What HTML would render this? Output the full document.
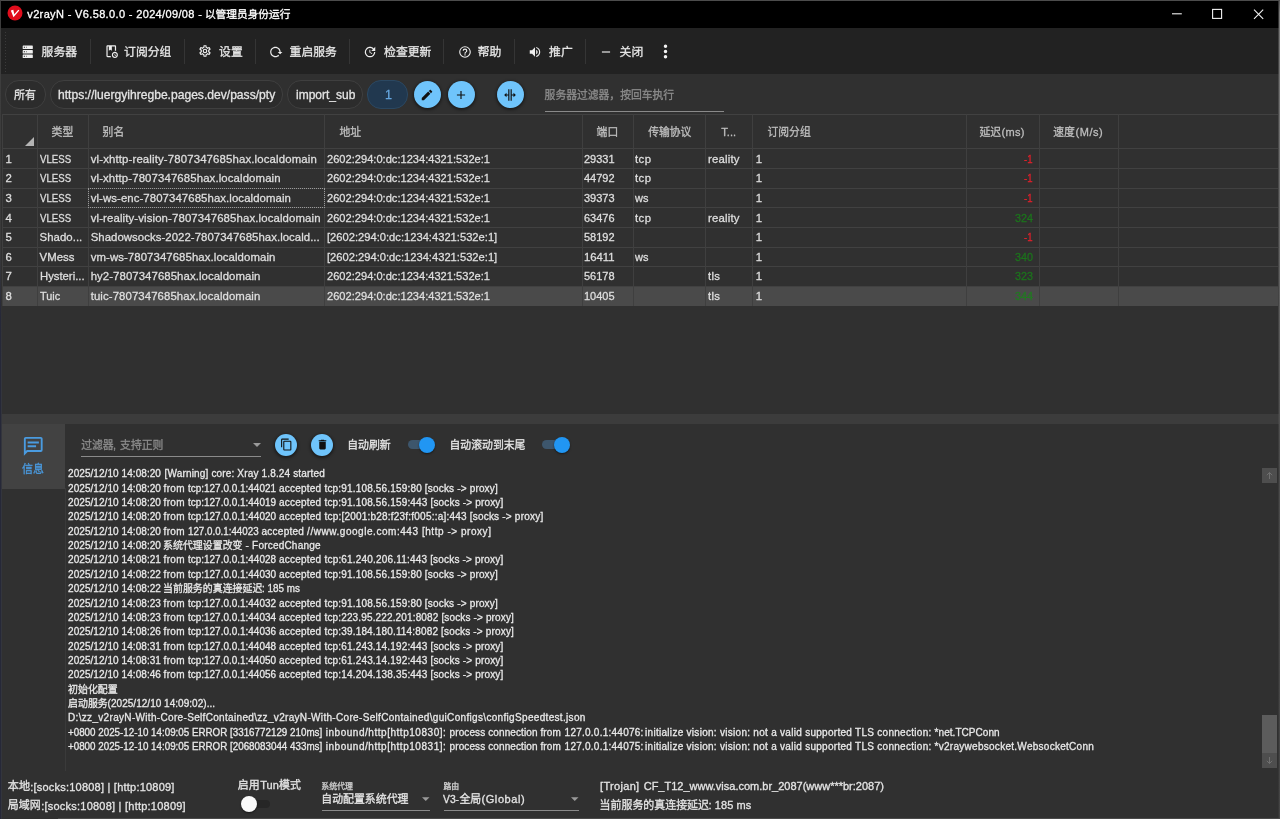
<!DOCTYPE html>
<html lang="zh-CN">
<head>
<meta charset="utf-8">
<title>v2rayN</title>
<style>
*{box-sizing:border-box;margin:0;padding:0}
html,body{width:1280px;height:819px;overflow:hidden;background:#303030}
body{font-family:"Liberation Sans","Noto Sans CJK SC",sans-serif;font-size:12px;color:#e4e4e4;position:relative}
.abs,.x,.ic,.ln{position:absolute}
.x{white-space:pre;line-height:1;display:block;transform-origin:0 0;-webkit-text-stroke:0.3px}
.ic{display:block;overflow:visible}
#title{left:0;top:0;width:1280px;height:28px;background:#000;border-top:1px solid #4c4c4c;border-left:1px solid #3c3c3c}
#toolbar{left:0;top:28px;width:1280px;height:46px;background:#222}
.sep{position:absolute;top:39px;width:1px;height:25px;background:#353535}
#filter{left:0;top:74px;width:1280px;height:40px;background:#303030}
.chip{position:absolute;top:80px;height:28.5px;border-radius:14px;border:1px solid #3f3f3f;background:#2c2c2c}
.fab{position:absolute;border-radius:50%;background:#6fc4fb;box-shadow:0 1px 3px 1px rgba(0,0,0,.45)}
#grid{left:0;top:114px;width:1280px;height:300px;background:#303030}
.ln{background:#484848}
.vl{position:absolute;top:114px;width:1px;height:192px;background:#3f3f3f}
.hl{position:absolute;left:2px;width:1276px;height:1px;background:#414141}
#split{left:0;top:414px;width:1280px;height:10px;background:#3c3c3c}
#log{left:0;top:424px;width:1280px;height:395px;background:#303030}
#tab{left:2px;top:424px;width:63px;height:64.5px;background:#424242}
</style>
</head>
<body>
<div id="title" class="abs"></div>
<div id="toolbar" class="abs"></div>
<div id="filter" class="abs"></div>
<div id="grid" class="abs"></div>
<div id="split" class="abs"></div>
<div id="log" class="abs"></div>
<div id="tab" class="abs"></div>
<svg class="ic" style="left:7.1px;top:5.1px" width="16" height="16" viewBox="0 0 16 16"><circle cx="8" cy="8" r="7.5" fill="#e00d1c"/><path d="M3.8,5.5L6.3,4.8L7.3,9.2L11.3,4.8L12.3,5.5L6.5,12.2Z" fill="#fff"/></svg>
<svg class="ic" style="left:1160px;top:1px" width="120" height="27" viewBox="0 0 120 27" fill="none" stroke="#f2f2f2" stroke-width="1.1"><path d="M12,12.8H21.8"/><rect x="52.6" y="8.4" width="9" height="9"/><path d="M94,8.6L103.2,17.8M103.2,8.6L94,17.8"/></svg>
<div class="abs" style="left:5px;top:32px;width:1px;height:40px;background:repeating-linear-gradient(#3a3a3a 0 1px,transparent 1px 3px)"></div>
<div class="sep" style="left:90px"></div>
<div class="sep" style="left:184px"></div>
<div class="sep" style="left:255px"></div>
<div class="sep" style="left:349px"></div>
<div class="sep" style="left:443px"></div>
<div class="sep" style="left:514px"></div>
<div class="sep" style="left:585px"></div>
<svg class="ic" style="left:21px;top:44.5px" width="13.5" height="13.5" viewBox="0 0 24 24" fill="#eeeeee" ><path d="M4,1H20A1,1 0 0,1 21,2V6A1,1 0 0,1 20,7H4A1,1 0 0,1 3,6V2A1,1 0 0,1 4,1M4,9H20A1,1 0 0,1 21,10V14A1,1 0 0,1 20,15H4A1,1 0 0,1 3,14V10A1,1 0 0,1 4,9M4,17H20A1,1 0 0,1 21,18V22A1,1 0 0,1 20,23H4A1,1 0 0,1 3,22V18A1,1 0 0,1 4,17M9,5H10V3H9V5M9,13H10V11H9V13M9,21H10V19H9V21M5,3V5H7V3H5M5,11V13H7V11H5M5,19V21H7V19H5Z"/></svg>
<svg class="ic" style="left:104px;top:44px" width="14.5" height="14.5" viewBox="0 0 24 24" fill="#eeeeee" ><path d="M13 4V11L10.5 9.5L8 11V4H6V20H11.08C11.2 20.72 11.45 21.39 11.8 22H6C4.9 22 4 21.11 4 20V4C4 2.9 4.9 2 6 2H18C19.11 2 20 2.9 20 4V11.08C19.67 11.03 19.34 11 19 11C18.66 11 18.33 11.03 18 11.08V4H13M18 13C15.24 13 13 15.24 13 18S15.24 23 18 23 23 20.76 23 18 20.76 13 18 13M18 21C16.34 21 15 19.66 15 18S16.34 15 18 15 21 16.34 21 18 19.66 21 18 21M18.5 16H17.5V18.5L19.64 19.74L20.14 18.87L18.5 17.92V16Z"/></svg>
<svg class="ic" style="left:197.7px;top:44.2px" width="14" height="14" viewBox="0 0 24 24" fill="#eeeeee" ><path d="M12,8A4,4 0 0,1 16,12A4,4 0 0,1 12,16A4,4 0 0,1 8,12A4,4 0 0,1 12,8M12,10A2,2 0 0,0 10,12A2,2 0 0,0 12,14A2,2 0 0,0 14,12A2,2 0 0,0 12,10M10,22C9.75,22 9.54,21.82 9.5,21.58L9.13,18.93C8.5,18.68 7.96,18.34 7.44,17.94L4.95,18.95C4.73,19.03 4.46,18.95 4.34,18.73L2.34,15.27C2.21,15.05 2.27,14.78 2.46,14.63L4.57,12.97L4.5,12L4.57,11L2.46,9.37C2.27,9.22 2.21,8.95 2.34,8.73L4.34,5.27C4.46,5.05 4.73,4.96 4.95,5.05L7.44,6.05C7.96,5.66 8.5,5.32 9.13,5.07L9.5,2.42C9.54,2.18 9.75,2 10,2H14C14.25,2 14.46,2.18 14.5,2.42L14.87,5.07C15.5,5.32 16.04,5.66 16.56,6.05L19.05,5.05C19.27,4.96 19.54,5.05 19.66,5.27L21.66,8.73C21.79,8.95 21.73,9.22 21.54,9.37L19.43,11L19.5,12L19.43,13L21.54,14.63C21.73,14.78 21.79,15.05 21.66,15.27L19.66,18.73C19.54,18.95 19.27,19.04 19.05,18.95L16.56,17.95C16.04,18.34 15.5,18.68 14.87,18.93L14.5,21.58C14.46,21.82 14.25,22 14,22H10M11.25,4L10.88,6.61C9.68,6.86 8.62,7.5 7.85,8.39L5.44,7.35L4.69,8.65L6.8,10.2C6.4,11.37 6.4,12.64 6.8,13.8L4.68,15.36L5.43,16.66L7.86,15.62C8.63,16.5 9.68,17.14 10.87,17.38L11.24,20H12.76L13.13,17.39C14.32,17.14 15.37,16.5 16.14,15.62L18.57,16.66L19.32,15.36L17.2,13.81C17.6,12.64 17.6,11.37 17.2,10.2L19.31,8.65L18.56,7.35L16.15,8.39C15.38,7.5 14.32,6.86 13.12,6.62L12.75,4H11.25Z"/></svg>
<svg class="ic" style="left:269px;top:44.5px" width="14" height="14" viewBox="0 0 24 24" fill="#eeeeee" ><path d="M2 12C2 16.97 6.03 21 11 21C13.39 21 15.68 20.06 17.4 18.4L15.9 16.9C14.63 18.25 12.86 19 11 19C4.76 19 1.64 11.46 6.05 7.05C10.46 2.64 18 5.77 18 12H15L19 16H19.1L23 12H20C20 7.03 15.97 3 11 3C6.03 3 2 7.03 2 12Z"/></svg>
<svg class="ic" style="left:363px;top:44.5px" width="14" height="14" viewBox="0 0 24 24" fill="#eeeeee" ><path d="M21,10.12H14.22L16.96,7.3C14.23,4.6 9.81,4.5 7.08,7.2C4.35,9.91 4.35,14.28 7.08,17C9.81,19.7 14.23,19.7 16.96,17C18.32,15.65 19,14.08 19,12.1H21C21,14.08 20.12,16.65 18.36,18.39C14.85,21.87 9.15,21.87 5.64,18.39C2.14,14.92 2.11,9.28 5.62,5.81C9.13,2.34 14.76,2.34 18.27,5.81L21,3V10.12M12.5,8V12.25L16,14.33L15.28,15.54L11,13V8H12.5Z"/></svg>
<svg class="ic" style="left:457.5px;top:44.5px" width="14" height="14" viewBox="0 0 24 24" fill="#eeeeee" ><path d="M11,18H13V16H11V18M12,2A10,10 0 0,0 2,12A10,10 0 0,0 12,22A10,10 0 0,0 22,12A10,10 0 0,0 12,2M12,20C7.59,20 4,16.41 4,12C4,7.59 7.59,4 12,4C16.41,4 20,7.59 20,12C20,16.41 16.41,20 12,20M12,6A4,4 0 0,0 8,10H10A2,2 0 0,1 12,8A2,2 0 0,1 14,10C14,12 11,11.75 11,15H13C13,12.75 16,12.5 16,10A4,4 0 0,0 12,6Z"/></svg>
<svg class="ic" style="left:527.5px;top:44.5px" width="14" height="14" viewBox="0 0 24 24" fill="#eeeeee" ><path d="M14,3.23V5.29C16.89,6.15 19,8.83 19,12C19,15.17 16.89,17.84 14,18.7V20.77C18,19.86 21,16.28 21,12C21,7.72 18,4.14 14,3.23M16.5,12C16.5,10.23 15.5,8.71 14,7.97V16C15.5,15.29 16.5,13.76 16.5,12M3,9V15H7L12,20V4L7,9H3Z"/></svg>
<svg class="ic" style="left:598.5px;top:44.5px" width="14" height="14" viewBox="0 0 24 24" fill="#eeeeee" ><path d="M19,13H5V11H19V13Z"/></svg>
<svg class="ic" style="left:654.5px;top:41px" width="21" height="21" viewBox="0 0 24 24" fill="#f4f4f4" ><path d="M12,16A2,2 0 0,1 14,18A2,2 0 0,1 12,20A2,2 0 0,1 10,18A2,2 0 0,1 12,16M12,10A2,2 0 0,1 14,12A2,2 0 0,1 12,14A2,2 0 0,1 10,12A2,2 0 0,1 12,10M12,4A2,2 0 0,1 14,6A2,2 0 0,1 12,8A2,2 0 0,1 10,6A2,2 0 0,1 12,4Z"/></svg>
<div class="chip" style="left:5px;width:41px;"></div>
<div class="chip" style="left:50px;width:233.3px;"></div>
<div class="chip" style="left:287.4px;width:75.80000000000001px;"></div>
<div class="chip" style="left:367.4px;width:40.80000000000001px;background:#21384f;border-color:#2b4862;"></div>
<div class="fab" style="left:413.5px;top:81.0px;width:27px;height:27px"></div>
<div class="fab" style="left:447.5px;top:81.0px;width:27px;height:27px"></div>
<div class="fab" style="left:496.5px;top:81.0px;width:27px;height:27px"></div>
<svg class="ic" style="left:420px;top:87.5px" width="14" height="14" viewBox="0 0 24 24" fill="#111" ><path d="M20.71,7.04C21.1,6.65 21.1,6 20.71,5.63L18.37,3.29C18,2.9 17.35,2.9 16.96,3.29L15.12,5.12L18.87,8.87M3,17.25V21H6.75L17.81,9.93L14.06,6.18L3,17.25Z"/></svg>
<svg class="ic" style="left:454px;top:87.5px" width="14" height="14" viewBox="0 0 24 24" fill="#111" ><path d="M19,13H13V19H11V13H5V11H11V5H13V11H19V13Z"/></svg>
<svg class="ic" style="left:503px;top:87.5px" width="14" height="14" viewBox="0 0 24 24" fill="#111" ><path d="M18,16V13H15V22H13V2H15V11H18V8L22,12L18,16M2,12L6,16V13H9V22H11V2H9V11H6V8L2,12Z"/></svg>
<div class="abs" style="left:545px;top:111px;width:179px;height:1px;background:#8a8a8a"></div>
<div class="abs" style="left:2px;top:286px;width:1276px;height:20px;background:#4a4a4a"></div>
<div class="hl" style="top:114px"></div>
<div class="hl" style="top:148px"></div>
<div class="hl" style="top:168px"></div>
<div class="hl" style="top:188px"></div>
<div class="hl" style="top:207px"></div>
<div class="hl" style="top:227px"></div>
<div class="hl" style="top:247px"></div>
<div class="hl" style="top:266px"></div>
<div class="hl" style="top:286px"></div>
<div class="vl" style="left:2px"></div>
<div class="vl" style="left:37px"></div>
<div class="vl" style="left:88px"></div>
<div class="vl" style="left:324px"></div>
<div class="vl" style="left:582px"></div>
<div class="vl" style="left:633px"></div>
<div class="vl" style="left:705px"></div>
<div class="vl" style="left:752px"></div>
<div class="vl" style="left:966px"></div>
<div class="vl" style="left:1039px"></div>
<div class="vl" style="left:1118px"></div>
<svg class="ic" style="left:25px;top:136.5px" width="9" height="9" viewBox="0 0 9 9"><path d="M9,0V9H0Z" fill="#b4b4b4"/></svg>
<div class="abs" style="left:88px;top:188px;width:237px;height:20px;border:1px dotted #9a9a9a"></div>
<svg class="ic" style="left:21.8px;top:434.7px" width="22.5" height="22.5" viewBox="0 0 24 24" fill="#4a9be0" ><path d="M20,2A2,2 0 0,1 22,4V16A2,2 0 0,1 20,18H6L2,22V4C2,2.89 2.9,2 4,2H20M4,4V17.17L5.17,16H20V4H4M6,7H18V9H6V7M6,11H15V13H6V11Z"/></svg>
<div class="abs" style="left:81px;top:456px;width:180px;height:1px;background:#8a8a8a"></div>
<svg class="ic" style="left:253px;top:442.5px" width="8" height="4" viewBox="0 0 8 4"><path d="M0,0H8L4,4Z" fill="#9a9a9a"/></svg>
<div class="fab" style="left:275.2px;top:433.5px;width:22px;height:22px"></div>
<div class="fab" style="left:311px;top:433.5px;width:22px;height:22px"></div>
<svg class="ic" style="left:279.7px;top:438.0px" width="13" height="13" viewBox="0 0 24 24" fill="#111" ><path d="M19,21H8V7H19M19,5H8A2,2 0 0,0 6,7V21A2,2 0 0,0 8,23H19A2,2 0 0,0 21,21V7A2,2 0 0,0 19,5M16,1H4A2,2 0 0,0 2,3V17H4V3H16V1Z"/></svg>
<svg class="ic" style="left:315.5px;top:438.0px" width="13" height="13" viewBox="0 0 24 24" fill="#111" ><path d="M19,4H15.5L14.5,3H9.5L8.5,4H5V6H19M6,19A2,2 0 0,0 8,21H16A2,2 0 0,0 18,19V7H6V19Z"/></svg>
<div class="abs" style="left:407.5px;top:440px;width:26px;height:9px;border-radius:4.5px;background:#3d566c"></div>
<div class="abs" style="left:419.3px;top:436.5px;width:16px;height:16px;border-radius:50%;background:#2196f3;box-shadow:0 1px 2px rgba(0,0,0,.5)"></div>
<div class="abs" style="left:542px;top:440px;width:26px;height:9px;border-radius:4.5px;background:#3d566c"></div>
<div class="abs" style="left:553.5px;top:436.5px;width:16px;height:16px;border-radius:50%;background:#2196f3;box-shadow:0 1px 2px rgba(0,0,0,.5)"></div>
<div class="abs" style="left:1262px;top:468px;width:15px;height:15px;background:#4e4e4e"></div>
<div class="abs" style="left:1262px;top:715px;width:15px;height:38px;background:#5c5c5c"></div>
<div class="abs" style="left:1262px;top:753px;width:15px;height:15px;background:#4e4e4e"></div>
<svg class="ic" style="left:1262px;top:468px" width="15" height="15" viewBox="0 0 15 15" fill="none" stroke="#707070" stroke-width="1"><path d="M7.5,11V4.5M4.8,7.2L7.5,4.5L10.2,7.2"/></svg>
<svg class="ic" style="left:1262px;top:753px" width="15" height="15" viewBox="0 0 15 15" fill="none" stroke="#707070" stroke-width="1"><path d="M7.5,4V10.5M4.8,7.8L7.5,10.5L10.2,7.8"/></svg>
<div class="abs" style="left:245px;top:799.5px;width:24.5px;height:8px;border-radius:4px;background:#262626"></div>
<div class="abs" style="left:240.6px;top:796px;width:16px;height:16px;border-radius:50%;background:#fafafa;box-shadow:0 1px 2px rgba(0,0,0,.5)"></div>
<div class="abs" style="left:321.5px;top:809.5px;width:108px;height:1px;background:#8a8a8a"></div>
<div class="abs" style="left:443.5px;top:809.5px;width:135px;height:1px;background:#8a8a8a"></div>
<svg class="ic" style="left:422px;top:796.5px" width="7.5" height="4" viewBox="0 0 8 4"><path d="M0,0H8L4,4Z" fill="#9a9a9a"/></svg>
<svg class="ic" style="left:570.5px;top:796.5px" width="7.5" height="4" viewBox="0 0 8 4"><path d="M0,0H8L4,4Z" fill="#9a9a9a"/></svg>
<div class="abs" style="left:0;top:28px;width:1px;height:791px;background:linear-gradient(#3e3e3e 0,#3a3a3a 220px,#262838 290px,#262838 100%)"></div>
<div class="abs" style="left:1px;top:74px;width:1px;height:745px;background:linear-gradient(#303030 0,#303030 220px,#33353d 290px,#33353d 100%)"></div>
<div class="abs" style="left:1279px;top:1px;width:1px;height:818px;background:linear-gradient(#555 0,#777 12px,#6a6a6a 200px,#4c4c4c 450px,#444 100%)"></div>
<div class="abs" style="left:1278px;top:1px;width:1px;height:818px;background:linear-gradient(rgba(110,110,110,.45) 0,rgba(110,110,110,.4) 200px,rgba(90,90,90,.25) 450px,rgba(80,80,80,.2) 100%)"></div>
<div class="abs" style="left:58px;top:818px;width:1222px;height:1px;background:#4a4a4a"></div>
<div class="abs" style="left:65px;top:488px;width:1px;height:283px;background:#3a3a3a"></div>
<div id="tx" class="abs" style="left:0;top:0;width:1280px;height:819px;will-change:transform">
<span class="x" style="left:27.3px;top:9px;font-size:11px;color:#ffffff;letter-spacing:0.353px;">v2rayN - V6.58.0.0 - 2024/09/08 - </span>
<span class="x" style="left:204.9px;top:9px;font-size:10.7px;color:#ffffff;">以管理员身份运行</span>
<span class="x" style="left:41.6px;top:47px;font-size:11.8px;color:#e6e6e6;">服务器</span>
<span class="x" style="left:124.1px;top:47px;font-size:11.8px;color:#e6e6e6;">订阅分组</span>
<span class="x" style="left:219.1px;top:47px;font-size:11.8px;color:#e6e6e6;">设置</span>
<span class="x" style="left:289.6px;top:47px;font-size:11.8px;color:#e6e6e6;">重启服务</span>
<span class="x" style="left:384.1px;top:47px;font-size:11.8px;color:#e6e6e6;">检查更新</span>
<span class="x" style="left:477.8px;top:47px;font-size:11.8px;color:#e6e6e6;">帮助</span>
<span class="x" style="left:549.1px;top:47px;font-size:11.8px;color:#e6e6e6;">推广</span>
<span class="x" style="left:619.6px;top:47px;font-size:11.8px;color:#e6e6e6;">关闭</span>
<span class="x" style="left:14.0px;top:90px;font-size:10.9px;">所有</span>
<span class="x" style="left:58.2px;top:89px;font-size:12.5px;transform:scaleX(0.9677);">https://luergyihregbe.pages.dev/pass/pty</span>
<span class="x" style="left:295.6px;top:89px;font-size:12.5px;transform:scaleX(0.9589);">import_sub</span>
<span class="x" style="left:385.1px;top:89px;font-size:12.5px;color:#66a6de;">1</span>
<span class="x" style="left:544.6px;top:90px;font-size:10.8px;color:#8c8c8c;">服务器过滤器，按回车执行</span>
<span class="x" style="left:51.6px;top:127px;font-size:10.8px;color:#bebebe;">类型</span>
<span class="x" style="left:102.6px;top:127px;font-size:10.8px;color:#bebebe;">别名</span>
<span class="x" style="left:339.4px;top:127px;font-size:10.8px;color:#bebebe;">地址</span>
<span class="x" style="left:596.6px;top:127px;font-size:10.8px;color:#bebebe;">端口</span>
<span class="x" style="left:648.2px;top:127px;font-size:10.8px;color:#bebebe;">传输协议</span>
<span class="x" style="left:767.5px;top:127px;font-size:10.8px;color:#bebebe;">订阅分组</span>
<span class="x" style="left:721.3px;top:127px;font-size:11px;color:#bebebe;letter-spacing:0.057px;">T...</span>
<span class="x" style="left:979.4px;top:127px;font-size:10.8px;color:#bebebe;">延迟</span>
<span class="x" style="left:1001.6px;top:127px;font-size:11px;color:#bebebe;letter-spacing:0.250px;">(ms)</span>
<span class="x" style="left:1053.3px;top:127px;font-size:10.8px;color:#bebebe;">速度</span>
<span class="x" style="left:1075.6px;top:127px;font-size:11px;color:#bebebe;letter-spacing:0.511px;">(M/s)</span>
<span class="x" style="left:5.4px;top:154px;font-size:11.4px;color:#dedede;">1</span>
<span class="x" style="left:39.6px;top:154px;font-size:11.4px;color:#dedede;transform:scaleX(0.8466);">VLESS</span>
<span class="x" style="left:90.7px;top:154px;font-size:11.4px;color:#dedede;letter-spacing:0.141px;">vl-xhttp-reality-7807347685hax.localdomain</span>
<span class="x" style="left:326.8px;top:154px;font-size:11.4px;color:#dedede;transform:scaleX(0.9748);">2602:294:0:dc:1234:4321:532e:1</span>
<span class="x" style="left:584.2px;top:154px;font-size:11.4px;color:#dedede;transform:scaleX(0.9657);">29331</span>
<span class="x" style="left:635.1px;top:154px;font-size:11.4px;color:#dedede;letter-spacing:0.366px;">tcp</span>
<span class="x" style="left:708.1px;top:154px;font-size:11.4px;color:#dedede;letter-spacing:0.173px;">reality</span>
<span class="x" style="left:755.8px;top:154px;font-size:11.4px;color:#dedede;">1</span>
<span class="x" style="left:1024.1px;top:154px;font-size:11.4px;color:#e2212b;transform:scaleX(0.8382);">-1</span>
<span class="x" style="left:5.4px;top:173px;font-size:11.4px;color:#dedede;">2</span>
<span class="x" style="left:39.6px;top:173px;font-size:11.4px;color:#dedede;transform:scaleX(0.8466);">VLESS</span>
<span class="x" style="left:90.7px;top:173px;font-size:11.4px;color:#dedede;letter-spacing:0.113px;">vl-xhttp-7807347685hax.localdomain</span>
<span class="x" style="left:326.8px;top:173px;font-size:11.4px;color:#dedede;transform:scaleX(0.9748);">2602:294:0:dc:1234:4321:532e:1</span>
<span class="x" style="left:584.2px;top:173px;font-size:11.4px;color:#dedede;transform:scaleX(0.9657);">44792</span>
<span class="x" style="left:635.1px;top:173px;font-size:11.4px;color:#dedede;letter-spacing:0.366px;">tcp</span>
<span class="x" style="left:755.8px;top:173px;font-size:11.4px;color:#dedede;">1</span>
<span class="x" style="left:1024.1px;top:173px;font-size:11.4px;color:#e2212b;transform:scaleX(0.8382);">-1</span>
<span class="x" style="left:5.4px;top:193px;font-size:11.4px;color:#dedede;">3</span>
<span class="x" style="left:39.6px;top:193px;font-size:11.4px;color:#dedede;transform:scaleX(0.8466);">VLESS</span>
<span class="x" style="left:90.7px;top:193px;font-size:11.4px;color:#dedede;letter-spacing:0.078px;">vl-ws-enc-7807347685hax.localdomain</span>
<span class="x" style="left:326.8px;top:193px;font-size:11.4px;color:#dedede;transform:scaleX(0.9748);">2602:294:0:dc:1234:4321:532e:1</span>
<span class="x" style="left:584.2px;top:193px;font-size:11.4px;color:#dedede;transform:scaleX(0.9657);">39373</span>
<span class="x" style="left:635.1px;top:193px;font-size:11.4px;color:#dedede;transform:scaleX(0.9625);">ws</span>
<span class="x" style="left:755.8px;top:193px;font-size:11.4px;color:#dedede;">1</span>
<span class="x" style="left:1024.1px;top:193px;font-size:11.4px;color:#e2212b;transform:scaleX(0.8382);">-1</span>
<span class="x" style="left:5.4px;top:213px;font-size:11.4px;color:#dedede;">4</span>
<span class="x" style="left:39.6px;top:213px;font-size:11.4px;color:#dedede;transform:scaleX(0.8466);">VLESS</span>
<span class="x" style="left:90.7px;top:213px;font-size:11.4px;color:#dedede;letter-spacing:0.121px;">vl-reality-vision-7807347685hax.localdomain</span>
<span class="x" style="left:326.8px;top:213px;font-size:11.4px;color:#dedede;transform:scaleX(0.9748);">2602:294:0:dc:1234:4321:532e:1</span>
<span class="x" style="left:584.2px;top:213px;font-size:11.4px;color:#dedede;transform:scaleX(0.9657);">63476</span>
<span class="x" style="left:635.1px;top:213px;font-size:11.4px;color:#dedede;letter-spacing:0.366px;">tcp</span>
<span class="x" style="left:708.1px;top:213px;font-size:11.4px;color:#dedede;letter-spacing:0.173px;">reality</span>
<span class="x" style="left:755.8px;top:213px;font-size:11.4px;color:#dedede;">1</span>
<span class="x" style="left:1014.8px;top:213px;font-size:11.4px;color:#1c731c;transform:scaleX(0.9466);">324</span>
<span class="x" style="left:5.4px;top:232px;font-size:11.4px;color:#dedede;">5</span>
<span class="x" style="left:39.6px;top:232px;font-size:11.4px;color:#dedede;letter-spacing:0.033px;">Shado...</span>
<span class="x" style="left:90.7px;top:232px;font-size:11.4px;color:#dedede;letter-spacing:0.044px;">Shadowsocks-2022-7807347685hax.locald...</span>
<span class="x" style="left:326.8px;top:232px;font-size:11.4px;color:#dedede;transform:scaleX(0.9807);">[2602:294:0:dc:1234:4321:532e:1]</span>
<span class="x" style="left:584.2px;top:232px;font-size:11.4px;color:#dedede;transform:scaleX(0.9657);">58192</span>
<span class="x" style="left:755.8px;top:232px;font-size:11.4px;color:#dedede;">1</span>
<span class="x" style="left:1024.1px;top:232px;font-size:11.4px;color:#e2212b;transform:scaleX(0.8382);">-1</span>
<span class="x" style="left:5.4px;top:252px;font-size:11.4px;color:#dedede;">6</span>
<span class="x" style="left:39.6px;top:252px;font-size:11.4px;color:#dedede;">VMess</span>
<span class="x" style="left:90.7px;top:252px;font-size:11.4px;color:#dedede;letter-spacing:0.076px;">vm-ws-7807347685hax.localdomain</span>
<span class="x" style="left:326.8px;top:252px;font-size:11.4px;color:#dedede;transform:scaleX(0.9807);">[2602:294:0:dc:1234:4321:532e:1]</span>
<span class="x" style="left:584.2px;top:252px;font-size:11.4px;color:#dedede;transform:scaleX(0.9921);">16411</span>
<span class="x" style="left:635.1px;top:252px;font-size:11.4px;color:#dedede;transform:scaleX(0.9625);">ws</span>
<span class="x" style="left:755.8px;top:252px;font-size:11.4px;color:#dedede;">1</span>
<span class="x" style="left:1014.8px;top:252px;font-size:11.4px;color:#1c731c;transform:scaleX(0.9466);">340</span>
<span class="x" style="left:5.4px;top:271px;font-size:11.4px;color:#dedede;">7</span>
<span class="x" style="left:39.6px;top:271px;font-size:11.4px;color:#dedede;transform:scaleX(0.9914);">Hysteri...</span>
<span class="x" style="left:90.7px;top:271px;font-size:11.4px;color:#dedede;letter-spacing:0.065px;">hy2-7807347685hax.localdomain</span>
<span class="x" style="left:326.8px;top:271px;font-size:11.4px;color:#dedede;transform:scaleX(0.9748);">2602:294:0:dc:1234:4321:532e:1</span>
<span class="x" style="left:584.2px;top:271px;font-size:11.4px;color:#dedede;transform:scaleX(0.9657);">56178</span>
<span class="x" style="left:708.1px;top:271px;font-size:11.4px;color:#dedede;letter-spacing:0.231px;">tls</span>
<span class="x" style="left:755.8px;top:271px;font-size:11.4px;color:#dedede;">1</span>
<span class="x" style="left:1014.8px;top:271px;font-size:11.4px;color:#1c731c;transform:scaleX(0.9466);">323</span>
<span class="x" style="left:5.4px;top:291px;font-size:11.4px;color:#dedede;">8</span>
<span class="x" style="left:39.6px;top:291px;font-size:11.4px;color:#dedede;transform:scaleX(0.9569);">Tuic</span>
<span class="x" style="left:90.7px;top:291px;font-size:11.4px;color:#dedede;letter-spacing:0.084px;">tuic-7807347685hax.localdomain</span>
<span class="x" style="left:326.8px;top:291px;font-size:11.4px;color:#dedede;transform:scaleX(0.9748);">2602:294:0:dc:1234:4321:532e:1</span>
<span class="x" style="left:584.2px;top:291px;font-size:11.4px;color:#dedede;transform:scaleX(0.9657);">10405</span>
<span class="x" style="left:708.1px;top:291px;font-size:11.4px;color:#dedede;letter-spacing:0.231px;">tls</span>
<span class="x" style="left:755.8px;top:291px;font-size:11.4px;color:#dedede;">1</span>
<span class="x" style="left:1014.8px;top:291px;font-size:11.4px;color:#217a21;transform:scaleX(0.9466);">344</span>
<span class="x" style="left:22.1px;top:464px;font-size:10.9px;color:#4a9be0;">信息</span>
<span class="x" style="left:81.2px;top:440px;font-size:10.8px;color:#8c8c8c;">过滤器</span>
<span class="x" style="left:113.1px;top:440px;font-size:11px;color:#8c8c8c;">, </span>
<span class="x" style="left:120.1px;top:440px;font-size:10.8px;color:#8c8c8c;">支持正则</span>
<span class="x" style="left:347.2px;top:440px;font-size:10.9px;">自动刷新</span>
<span class="x" style="left:449.5px;top:440px;font-size:10.85px;">自动滚动到末尾</span>
<span class="x" style="left:68.0px;top:469px;font-size:10px;color:#e8e8e8;letter-spacing:0.065px;">2025/12/10 14:08:20 </span>
<span class="x" style="left:164.6px;top:469px;font-size:10px;color:#e8e8e8;letter-spacing:0.160px;">[Warning] core: Xray 1.8.24 started</span>
<span class="x" style="left:68.0px;top:484px;font-size:10px;color:#e8e8e8;letter-spacing:0.065px;">2025/12/10 14:08:20 </span>
<span class="x" style="left:163.5px;top:484px;font-size:10px;color:#e8e8e8;letter-spacing:0.350px;">from </span>
<span class="x" style="left:188.1px;top:484px;font-size:10px;color:#e8e8e8;transform:scaleX(0.9952);">tcp:127.0.0.1:44021 </span>
<span class="x" style="left:279.0px;top:484px;font-size:10px;color:#e8e8e8;letter-spacing:0.226px;">accepted </span>
<span class="x" style="left:324.5px;top:484px;font-size:10px;color:#e8e8e8;letter-spacing:0.172px;">tcp:91.108.56.159:80 [socks -&gt; proxy]</span>
<span class="x" style="left:68.0px;top:498px;font-size:10px;color:#e8e8e8;letter-spacing:0.065px;">2025/12/10 14:08:20 </span>
<span class="x" style="left:163.5px;top:498px;font-size:10px;color:#e8e8e8;letter-spacing:0.350px;">from </span>
<span class="x" style="left:188.1px;top:498px;font-size:10px;color:#e8e8e8;transform:scaleX(0.9952);">tcp:127.0.0.1:44019 </span>
<span class="x" style="left:279.0px;top:498px;font-size:10px;color:#e8e8e8;letter-spacing:0.226px;">accepted </span>
<span class="x" style="left:324.5px;top:498px;font-size:10px;color:#e8e8e8;letter-spacing:0.166px;">tcp:91.108.56.159:443 [socks -&gt; proxy]</span>
<span class="x" style="left:68.0px;top:512px;font-size:10px;color:#e8e8e8;letter-spacing:0.065px;">2025/12/10 14:08:20 </span>
<span class="x" style="left:163.5px;top:512px;font-size:10px;color:#e8e8e8;letter-spacing:0.350px;">from </span>
<span class="x" style="left:188.1px;top:512px;font-size:10px;color:#e8e8e8;transform:scaleX(0.9952);">tcp:127.0.0.1:44020 </span>
<span class="x" style="left:279.0px;top:512px;font-size:10px;color:#e8e8e8;letter-spacing:0.226px;">accepted </span>
<span class="x" style="left:324.5px;top:512px;font-size:10px;color:#e8e8e8;letter-spacing:0.211px;">tcp:[2001:b28:f23f:f005::a]:443 [socks -&gt; proxy]</span>
<span class="x" style="left:68.0px;top:527px;font-size:10px;color:#e8e8e8;letter-spacing:0.065px;">2025/12/10 14:08:20 </span>
<span class="x" style="left:163.5px;top:527px;font-size:10px;color:#e8e8e8;letter-spacing:0.350px;">from </span>
<span class="x" style="left:188.1px;top:527px;font-size:10px;color:#e8e8e8;transform:scaleX(0.9765);">127.0.0.1:44023 </span>
<span class="x" style="left:261.5px;top:527px;font-size:10px;color:#e8e8e8;letter-spacing:0.263px;">accepted </span>
<span class="x" style="left:307.1px;top:527px;font-size:10px;color:#e8e8e8;letter-spacing:0.544px;">//www.google.com:443 [http -&gt; proxy]</span>
<span class="x" style="left:68.0px;top:555px;font-size:10px;color:#e8e8e8;letter-spacing:0.065px;">2025/12/10 14:08:21 </span>
<span class="x" style="left:163.5px;top:555px;font-size:10px;color:#e8e8e8;letter-spacing:0.350px;">from </span>
<span class="x" style="left:188.1px;top:555px;font-size:10px;color:#e8e8e8;transform:scaleX(0.9952);">tcp:127.0.0.1:44028 </span>
<span class="x" style="left:279.0px;top:555px;font-size:10px;color:#e8e8e8;letter-spacing:0.226px;">accepted </span>
<span class="x" style="left:324.5px;top:555px;font-size:10px;color:#e8e8e8;letter-spacing:0.185px;">tcp:61.240.206.11:443 [socks -&gt; proxy]</span>
<span class="x" style="left:68.0px;top:570px;font-size:10px;color:#e8e8e8;letter-spacing:0.065px;">2025/12/10 14:08:22 </span>
<span class="x" style="left:163.5px;top:570px;font-size:10px;color:#e8e8e8;letter-spacing:0.350px;">from </span>
<span class="x" style="left:188.1px;top:570px;font-size:10px;color:#e8e8e8;transform:scaleX(0.9952);">tcp:127.0.0.1:44030 </span>
<span class="x" style="left:279.0px;top:570px;font-size:10px;color:#e8e8e8;letter-spacing:0.226px;">accepted </span>
<span class="x" style="left:324.5px;top:570px;font-size:10px;color:#e8e8e8;letter-spacing:0.172px;">tcp:91.108.56.159:80 [socks -&gt; proxy]</span>
<span class="x" style="left:68.0px;top:599px;font-size:10px;color:#e8e8e8;letter-spacing:0.065px;">2025/12/10 14:08:23 </span>
<span class="x" style="left:163.5px;top:599px;font-size:10px;color:#e8e8e8;letter-spacing:0.350px;">from </span>
<span class="x" style="left:188.1px;top:599px;font-size:10px;color:#e8e8e8;transform:scaleX(0.9952);">tcp:127.0.0.1:44032 </span>
<span class="x" style="left:279.0px;top:599px;font-size:10px;color:#e8e8e8;letter-spacing:0.226px;">accepted </span>
<span class="x" style="left:324.5px;top:599px;font-size:10px;color:#e8e8e8;letter-spacing:0.172px;">tcp:91.108.56.159:80 [socks -&gt; proxy]</span>
<span class="x" style="left:68.0px;top:613px;font-size:10px;color:#e8e8e8;letter-spacing:0.065px;">2025/12/10 14:08:23 </span>
<span class="x" style="left:163.5px;top:613px;font-size:10px;color:#e8e8e8;letter-spacing:0.350px;">from </span>
<span class="x" style="left:188.1px;top:613px;font-size:10px;color:#e8e8e8;transform:scaleX(0.9952);">tcp:127.0.0.1:44034 </span>
<span class="x" style="left:279.0px;top:613px;font-size:10px;color:#e8e8e8;letter-spacing:0.226px;">accepted </span>
<span class="x" style="left:324.5px;top:613px;font-size:10px;color:#e8e8e8;letter-spacing:0.144px;">tcp:223.95.222.201:8082 [socks -&gt; proxy]</span>
<span class="x" style="left:68.0px;top:627px;font-size:10px;color:#e8e8e8;letter-spacing:0.065px;">2025/12/10 14:08:26 </span>
<span class="x" style="left:163.5px;top:627px;font-size:10px;color:#e8e8e8;letter-spacing:0.350px;">from </span>
<span class="x" style="left:188.1px;top:627px;font-size:10px;color:#e8e8e8;transform:scaleX(0.9952);">tcp:127.0.0.1:44036 </span>
<span class="x" style="left:279.0px;top:627px;font-size:10px;color:#e8e8e8;letter-spacing:0.226px;">accepted </span>
<span class="x" style="left:324.5px;top:627px;font-size:10px;color:#e8e8e8;letter-spacing:0.163px;">tcp:39.184.180.114:8082 [socks -&gt; proxy]</span>
<span class="x" style="left:68.0px;top:642px;font-size:10px;color:#e8e8e8;letter-spacing:0.065px;">2025/12/10 14:08:31 </span>
<span class="x" style="left:163.5px;top:642px;font-size:10px;color:#e8e8e8;letter-spacing:0.350px;">from </span>
<span class="x" style="left:188.1px;top:642px;font-size:10px;color:#e8e8e8;transform:scaleX(0.9952);">tcp:127.0.0.1:44048 </span>
<span class="x" style="left:279.0px;top:642px;font-size:10px;color:#e8e8e8;letter-spacing:0.226px;">accepted </span>
<span class="x" style="left:324.5px;top:642px;font-size:10px;color:#e8e8e8;letter-spacing:0.166px;">tcp:61.243.14.192:443 [socks -&gt; proxy]</span>
<span class="x" style="left:68.0px;top:656px;font-size:10px;color:#e8e8e8;letter-spacing:0.065px;">2025/12/10 14:08:31 </span>
<span class="x" style="left:163.5px;top:656px;font-size:10px;color:#e8e8e8;letter-spacing:0.350px;">from </span>
<span class="x" style="left:188.1px;top:656px;font-size:10px;color:#e8e8e8;transform:scaleX(0.9952);">tcp:127.0.0.1:44050 </span>
<span class="x" style="left:279.0px;top:656px;font-size:10px;color:#e8e8e8;letter-spacing:0.226px;">accepted </span>
<span class="x" style="left:324.5px;top:656px;font-size:10px;color:#e8e8e8;letter-spacing:0.166px;">tcp:61.243.14.192:443 [socks -&gt; proxy]</span>
<span class="x" style="left:68.0px;top:670px;font-size:10px;color:#e8e8e8;letter-spacing:0.065px;">2025/12/10 14:08:46 </span>
<span class="x" style="left:163.5px;top:670px;font-size:10px;color:#e8e8e8;letter-spacing:0.350px;">from </span>
<span class="x" style="left:188.1px;top:670px;font-size:10px;color:#e8e8e8;transform:scaleX(0.9952);">tcp:127.0.0.1:44056 </span>
<span class="x" style="left:279.0px;top:670px;font-size:10px;color:#e8e8e8;letter-spacing:0.226px;">accepted </span>
<span class="x" style="left:324.5px;top:670px;font-size:10px;color:#e8e8e8;letter-spacing:0.166px;">tcp:14.204.138.35:443 [socks -&gt; proxy]</span>
<span class="x" style="left:68.0px;top:713px;font-size:10px;color:#e8e8e8;letter-spacing:0.324px;">D:\zz_v2rayN-With-Core-SelfContained\zz_v2rayN-With-Core-SelfContained\guiConfigs\configSpeedtest.json</span>
<span class="x" style="left:67.7px;top:728px;font-size:10px;color:#e8e8e8;transform:scaleX(0.9796);">+0800 2025-12-10 14:09:05 ERROR </span>
<span class="x" style="left:230.2px;top:728px;font-size:10px;color:#e8e8e8;transform:scaleX(0.9812);">[3316772129 210ms] </span>
<span class="x" style="left:325.7px;top:728px;font-size:10px;color:#e8e8e8;letter-spacing:0.534px;">inbound/http[http10830]: </span>
<span class="x" style="left:449.6px;top:728px;font-size:10px;color:#e8e8e8;letter-spacing:0.102px;">process connection from </span>
<span class="x" style="left:564.6px;top:728px;font-size:10px;color:#e8e8e8;letter-spacing:0.245px;">127.0.0.1:44076: </span>
<span class="x" style="left:645.1px;top:728px;font-size:10px;color:#e8e8e8;letter-spacing:0.284px;">initialize vision: vision: not a valid supported TLS connection: </span>
<span class="x" style="left:934.6px;top:728px;font-size:10px;color:#e8e8e8;letter-spacing:0.051px;">*net.TCPConn</span>
<span class="x" style="left:67.7px;top:742px;font-size:10px;color:#e8e8e8;transform:scaleX(0.9796);">+0800 2025-12-10 14:09:05 ERROR </span>
<span class="x" style="left:230.2px;top:742px;font-size:10px;color:#e8e8e8;transform:scaleX(0.9812);">[2068083044 433ms] </span>
<span class="x" style="left:325.7px;top:742px;font-size:10px;color:#e8e8e8;letter-spacing:0.534px;">inbound/http[http10831]: </span>
<span class="x" style="left:449.6px;top:742px;font-size:10px;color:#e8e8e8;letter-spacing:0.102px;">process connection from </span>
<span class="x" style="left:564.6px;top:742px;font-size:10px;color:#e8e8e8;letter-spacing:0.245px;">127.0.0.1:44075: </span>
<span class="x" style="left:645.1px;top:742px;font-size:10px;color:#e8e8e8;letter-spacing:0.284px;">initialize vision: vision: not a valid supported TLS connection: </span>
<span class="x" style="left:934.6px;top:742px;font-size:10px;color:#e8e8e8;letter-spacing:0.274px;">*v2raywebsocket.WebsocketConn</span>
<span class="x" style="left:68.0px;top:541px;font-size:10px;color:#e8e8e8;letter-spacing:0.065px;">2025/12/10 14:08:20 </span>
<span class="x" style="left:163.0px;top:541px;font-size:9.95px;color:#e8e8e8;">系统代理设置改变</span>
<span class="x" style="left:242.6px;top:541px;font-size:10px;color:#e8e8e8;letter-spacing:0.204px;"> - ForcedChange</span>
<span class="x" style="left:68.0px;top:584px;font-size:10px;color:#e8e8e8;letter-spacing:0.065px;">2025/12/10 14:08:22 </span>
<span class="x" style="left:163.0px;top:584px;font-size:9.95px;color:#e8e8e8;">当前服务的真连接延迟</span>
<span class="x" style="left:262.0px;top:584px;font-size:10px;color:#e8e8e8;transform:scaleX(0.9880);">: 185 ms</span>
<span class="x" style="left:68.0px;top:685px;font-size:9.95px;color:#e8e8e8;">初始化配置</span>
<span class="x" style="left:68.0px;top:699px;font-size:9.95px;color:#e8e8e8;">启动服务</span>
<span class="x" style="left:107.6px;top:699px;font-size:10px;color:#e8e8e8;letter-spacing:0.031px;">(2025/12/10 14:09:02)...</span>
<span class="x" style="left:7.8px;top:781px;font-size:11.1px;">本地</span>
<span class="x" style="left:30.2px;top:782px;font-size:11px;letter-spacing:0.222px;">:[socks:10808] | [http:10809]</span>
<span class="x" style="left:7.8px;top:800px;font-size:10.95px;">局域网</span>
<span class="x" style="left:41.2px;top:801px;font-size:11px;letter-spacing:0.230px;">:[socks:10808] | [http:10809]</span>
<span class="x" style="left:237.8px;top:780px;font-size:10.9px;">启用</span>
<span class="x" style="left:260.2px;top:780px;font-size:11px;letter-spacing:0.118px;">Tun</span>
<span class="x" style="left:279.1px;top:780px;font-size:10.9px;">模式</span>
<span class="x" style="left:321.3px;top:783px;font-size:7.9px;color:#d0d0d0;">系统代理</span>
<span class="x" style="left:321.3px;top:794px;font-size:10.9px;">自动配置系统代理</span>
<span class="x" style="left:443.4px;top:783px;font-size:7.9px;color:#d0d0d0;">路由</span>
<span class="x" style="left:443.4px;top:794px;font-size:11px;transform:scaleX(0.9372);">V3-</span>
<span class="x" style="left:459.4px;top:794px;font-size:10.9px;">全局</span>
<span class="x" style="left:481.4px;top:794px;font-size:11px;letter-spacing:0.609px;">(Global)</span>
<span class="x" style="left:600.0px;top:781px;font-size:11px;letter-spacing:0.326px;">[Trojan] </span>
<span class="x" style="left:643.7px;top:781px;font-size:11px;">CF_T12_www.visa.com.br_2087(www***br:2087)</span>
<span class="x" style="left:599.6px;top:800px;font-size:10.95px;">当前服务的真连接延迟</span>
<span class="x" style="left:708.4px;top:800px;font-size:11px;letter-spacing:0.102px;">: 185 ms</span>
</div>
</body>
</html>
